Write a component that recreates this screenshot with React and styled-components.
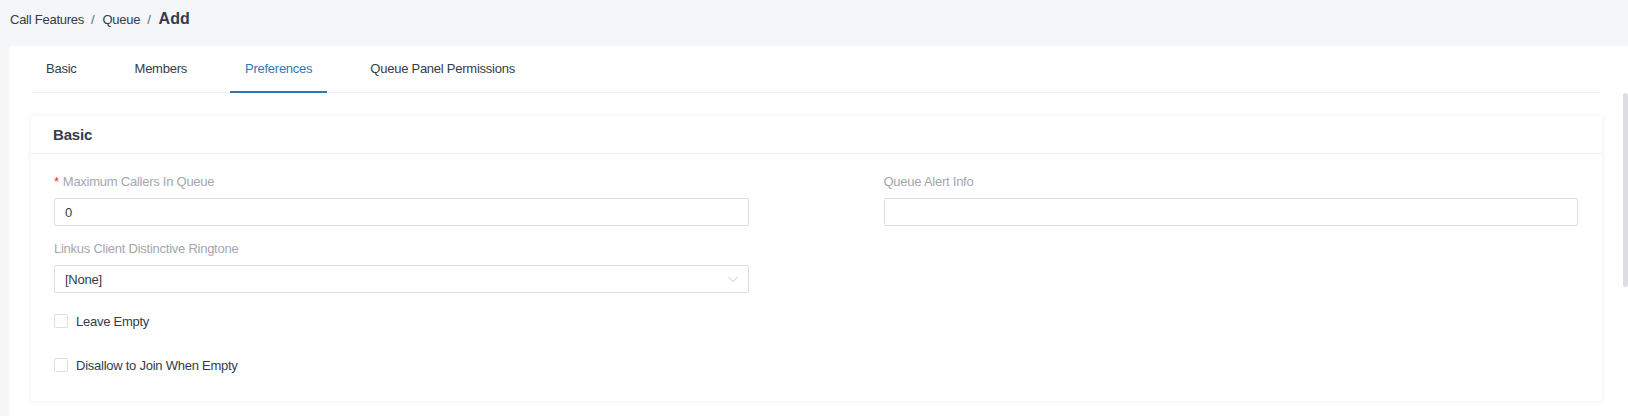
import React from 'react'
import styled, { createGlobalStyle } from 'styled-components'

const GlobalStyle = createGlobalStyle`
    html, body, #root {
        height: 100%;
        margin: 0;
    }
    body {
        font-family: "Liberation Sans", Arial, sans-serif;
        font-size: 13px;
        letter-spacing: -0.25px;
        background: #f5f6f8;
        color: #333c4a;
        overflow: hidden;
    }
    * {
        box-sizing: border-box;
    }
`

const Page = styled.div`
    height: 100vh;
    display: flex;
    flex-direction: column;
`

const Breadcrumb = styled.div`
    height: 46px;
    padding: 0 0 8px 10px;
    display: flex;
    align-items: center;
    color: #333c4a;
`

const Sep = styled.span`
    margin: 0 8px 0 7px;
    color: #5c6370;
`

const Current = styled.span`
    font-size: 16px;
    font-weight: bold;
    letter-spacing: 0;
    color: #333c4a;
`

const Panel = styled.div`
    position: relative;
    flex: 1;
    min-height: 0;
    margin-left: 9px;
    background: #fff;
    display: flex;
    flex-direction: column;
`

const TabBar = styled.div`
    display: flex;
    gap: 28px;
    margin: 0 29px 0 22px;
    border-bottom: 1px solid #eceef1;
`

const Tab = styled.div`
    height: 47px;
    padding: 0 15px;
    display: flex;
    align-items: center;
    cursor: pointer;
    color: ${p => (p.$active ? '#2f7ab4' : '#333c4a')};
    border-bottom: 2px solid ${p => (p.$active ? '#2f7ab4' : 'transparent')};
    margin-bottom: -1px;
`

const ScrollArea = styled.div`
    flex: 1;
    min-height: 0;
    overflow-y: auto;
    scrollbar-width: none;
    padding: 23px 26px 229px 22px;

    &::-webkit-scrollbar {
        display: none;
    }
`

// drawn thumb, the native bar is hidden
const ScrollThumb = styled.div`
    position: absolute;
    right: 0;
    top: 47px;
    width: 5px;
    height: 194px;
    border-radius: 3px;
    background: #dcdee2;
`

const Card = styled.div`
    background: #fff;
    box-shadow: 0 0 6px rgba(0, 0, 0, 0.07);
    border-radius: 2px;
`

const CardHeader = styled.div`
    height: 38px;
    padding: 0 22px;
    display: flex;
    align-items: center;
    font-size: 15px;
    font-weight: bold;
    letter-spacing: -0.2px;
    color: #333c4a;
    border-bottom: 1px solid #eef0f2;
`

const CardBody = styled.div`
    padding: 18px 24px 26px 23px;
`

const FormGrid = styled.div`
    display: grid;
    grid-template-columns: 1fr 1fr;
    column-gap: 135px;
`

const FormItem = styled.div`
    margin-bottom: 13px;
`

const Label = styled.div`
    height: 20px;
    line-height: 20px;
    margin-bottom: 6px;
    color: #a3a7ae;

    ${p => p.$required && `
        &::before {
            content: '*';
            color: #e0302c;
            margin-right: 4px;
        }
    `}
`

const Input = styled.input`
    display: block;
    width: 100%;
    height: 28px;
    padding: 0 10px;
    border: 1px solid #dcdfe4;
    border-radius: 2px;
    font-family: inherit;
    font-size: 13px;
    letter-spacing: -0.25px;
    color: #333c4a;
    outline: none;
`

const SelectBox = styled.div`
    height: 28px;
    padding: 0 10px;
    border: 1px solid #dcdfe4;
    border-radius: 2px;
    display: flex;
    align-items: center;
    color: #333c4a;
    cursor: pointer;
`

const Arrow = styled.svg`
    margin-left: auto;
    width: 10px;
    height: 7px;
`

const CheckRow = styled.label`
    display: flex;
    align-items: center;
    height: 20px;
    margin-top: ${p => p.$gap}px;
    color: #333c4a;
    cursor: pointer;
`

const CheckBox = styled.span`
    width: 14px;
    height: 14px;
    border: 1px solid #dcdfe4;
    border-radius: 2px;
    background: #fff;
    margin-right: 8px;
`

const tabs = ['Basic', 'Members', 'Preferences', 'Queue Panel Permissions']

export default function App() {
    return (
        <>
            <GlobalStyle />
            <Page>
                <Breadcrumb>
                    <span>Call Features</span>
                    <Sep>/</Sep>
                    <span>Queue</span>
                    <Sep>/</Sep>
                    <Current>Add</Current>
                </Breadcrumb>
                <Panel>
                    <TabBar>
                        {tabs.map(t => (
                            <Tab key={t} $active={t === 'Preferences'}>{t}</Tab>
                        ))}
                    </TabBar>
                    <ScrollArea>
                        <Card>
                            <CardHeader>Basic</CardHeader>
                            <CardBody>
                                <FormGrid>
                                    <div>
                                        <FormItem>
                                            <Label $required>Maximum Callers In Queue</Label>
                                            <Input defaultValue="0" />
                                        </FormItem>
                                        <FormItem>
                                            <Label>Linkus Client Distinctive Ringtone</Label>
                                            <SelectBox>
                                                [None]
                                                <Arrow viewBox="0 0 10 7">
                                                    <path d="M0.5 0.8 L5 5.8 L9.5 0.8" fill="none" stroke="#c4c7cc" strokeWidth="1" />
                                                </Arrow>
                                            </SelectBox>
                                        </FormItem>
                                    </div>
                                    <div>
                                        <FormItem>
                                            <Label>Queue Alert Info</Label>
                                            <Input />
                                        </FormItem>
                                    </div>
                                </FormGrid>
                                <CheckRow $gap={5}>
                                    <CheckBox />
                                    Leave Empty
                                </CheckRow>
                                <CheckRow $gap={24}>
                                    <CheckBox />
                                    Disallow to Join When Empty
                                </CheckRow>
                            </CardBody>
                        </Card>
                    </ScrollArea>
                    <ScrollThumb />
                </Panel>
            </Page>
        </>
    )
}
